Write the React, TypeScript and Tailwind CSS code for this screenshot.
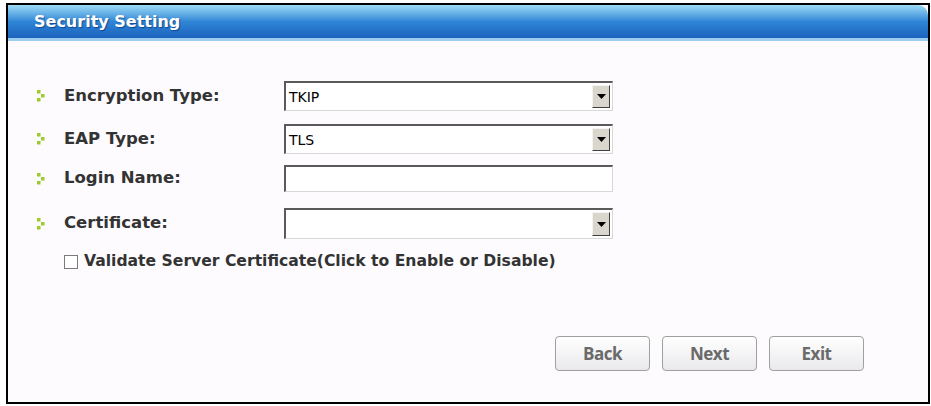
import React from "react";

const labelFont = { fontFamily: '"DejaVu Sans", Tahoma, sans-serif' };

const Bullet: React.FC = () => (
  <svg width="8" height="12" viewBox="0 0 8 12" className="mr-[19px] shrink-0">
    <rect x="0" y="0" width="3.5" height="3.5" fill="#9ccb2c" />
    <rect x="4" y="4" width="3.5" height="3.5" fill="#9ccb2c" />
    <rect x="0" y="8" width="3.5" height="3.5" fill="#9ccb2c" />
  </svg>
);

const SunkenBox: React.FC<{ h: string; children?: React.ReactNode }> = ({ h, children }) => (
  <div
    className={`w-[329px] ${h} flex bg-white border-t-2 border-l-2 border-b border-r border-t-[#5a5a5a] border-l-[#5a5a5a] border-b-[#d8d8d8] border-r-[#d8d8d8]`}
  >
    {children}
  </div>
);

const SelectBox: React.FC<{ value: string; h: string }> = ({ value, h }) => (
  <SunkenBox h={h}>
    <div className="flex-1 flex items-center pl-[3px] pt-[2px] text-[14px] text-black" style={{ fontFamily: 'Tahoma, "DejaVu Sans", sans-serif' }}>
      {value}
    </div>
    <div className="w-[18px] my-[2px] mr-[2px] bg-[#d9d6ce] border border-t-[#f4f4f4] border-l-[#f4f4f4] border-b-[#404040] border-r-[#404040] flex items-center justify-center">
      <svg width="9" height="5" viewBox="0 0 9 5">
        <path d="M0 0 H9 L4.5 5 Z" fill="#000" />
      </svg>
    </div>
  </SunkenBox>
);

const Row: React.FC<{ label: string; mt: string; children: React.ReactNode }> = ({ label, mt, children }) => (
  <div className={`flex items-center ${mt}`}>
    <div className="w-[276px] flex items-center pl-[29px]">
      <Bullet />
      <span className="text-[16.5px] font-bold text-[#333333]" style={labelFont}>
        {label}
      </span>
    </div>
    {children}
  </div>
);

const Button: React.FC<{ label: string }> = ({ label }) => (
  <button
    className="w-[95px] h-[35px] rounded-[4px] border border-[#a0a0a0] bg-gradient-to-b from-white to-[#e9e9ec] text-[17px] font-bold text-[#6a6a6a]"
    style={{ fontFamily: '"Open Sans", sans-serif', letterSpacing: "-0.5px" }}
  >
    {label}
  </button>
);

export default function App() {
  return (
    <div className="w-[931px] h-[406px] bg-white pl-[6px] pt-[3px]">
      <div className="w-[924px] h-[401px] border-2 border-black bg-[#fdfbfe] flex flex-col">
        <div className="h-[36px] rounded-tr-[10px] bg-gradient-to-b from-[#9ddcf5] via-[#2f86d6] to-[#1d62bd] border-b-[3px] border-b-[#9cccf0] flex items-center pl-[26px]">
          <span
            className="text-[16px] font-bold text-white"
            style={{ ...labelFont, textShadow: "1px 1px 1px rgba(0,40,100,0.6)" }}
          >
            Security Setting
          </span>
        </div>
        <div className="flex flex-col pt-[40px]">
          <Row label="Encryption Type:" mt="mt-0">
            <SelectBox value="TKIP" h="h-[30px]" />
          </Row>
          <Row label="EAP Type:" mt="mt-[13px]">
            <SelectBox value="TLS" h="h-[30px]" />
          </Row>
          <Row label="Login Name:" mt="mt-[11px]">
            <SunkenBox h="h-[27px]" />
          </Row>
          <Row label="Certificate:" mt="mt-[16px]">
            <SelectBox value="" h="h-[31px]" />
          </Row>
          <div className="flex items-center mt-[11px] pl-[56px]">
            <div className="w-[14px] h-[14px] bg-white border border-[#7a7a7a] mr-[6px]" />
            <span className="text-[15.6px] font-bold text-[#333333]" style={labelFont}>
              Validate Server Certificate(Click to Enable or Disable)
            </span>
          </div>
          <div className="flex justify-end gap-[12px] mt-[63px] pr-[64px]">
            <Button label="Back" />
            <Button label="Next" />
            <Button label="Exit" />
          </div>
        </div>
      </div>
    </div>
  );
}
